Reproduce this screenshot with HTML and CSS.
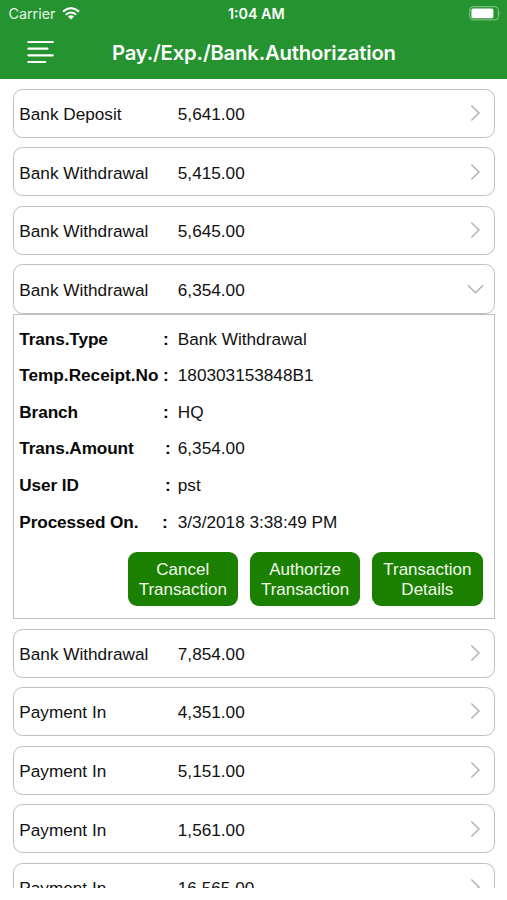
FILE: index.html
```html
<!DOCTYPE html>
<html lang="en">
<head>
<meta charset="utf-8">
<title>Pay./Exp./Bank.Authorization</title>
<link rel="stylesheet" href="styles.css">
</head>
<body>
<svg width="0" height="0" class="defs">
  <symbol id="right" viewBox="0 0 18 18"><path d="M4.4 1.6 12 9 4.4 16.4"/></symbol>
  <symbol id="down" viewBox="0 0 18 18"><path d="M1 5.2 8.5 12.7 16 5.2"/></symbol>
</svg>
<header class="header">
  <div class="status">
    <div class="carrier"><span>Carrier</span>
      <svg width="18" height="13" viewBox="0 0 18 13" fill="none" stroke="#fff" stroke-width="2.1"><path d="M1 4.6Q9-2.2 17 4.6M3.8 7.7Q9 3.3 14.2 7.7"/><path d="M5.9 9.5Q9 7.2 12.1 9.5L9 12.6Z" fill="#fff" stroke="none"/></svg>
    </div>
    <span class="time">1:04 AM</span>
    <svg class="battery" width="33" height="15" viewBox="0 0 33 15"><rect x=".7" y=".7" width="28.6" height="13.2" rx="3.2" fill="none" stroke="#8bc98f" stroke-width="1"/><rect x="2.4" y="2.4" width="22" height="9.8" rx="1.5" fill="#fff"/><path d="M30.7 5q1.6 2.3 0 4.6z" fill="#8bc98f"/></svg>
  </div>
  <div class="navbar">
    <svg class="menu" width="28" height="24" viewBox="0 0 28 24" fill="none" stroke="#fff" stroke-width="2.2" stroke-linecap="round"><path d="M2.4 2H26.8M2.4 8.7H21.5M2.4 15.3H26.8M2.4 22H19.3"/></svg>
    <h1 class="title">Pay./Exp./Bank.Authorization</h1>
  </div>
</header>
<main class="list">
  <div class="row"><span class="type">Bank Deposit</span><span class="amount">5,641.00</span><svg class="chevron"><use href="#right"/></svg></div>
  <div class="row"><span class="type">Bank Withdrawal</span><span class="amount">5,415.00</span><svg class="chevron"><use href="#right"/></svg></div>
  <div class="row"><span class="type">Bank Withdrawal</span><span class="amount">5,645.00</span><svg class="chevron"><use href="#right"/></svg></div>
  <div class="row open"><span class="type">Bank Withdrawal</span><span class="amount">6,354.00</span><svg class="chevron"><use href="#down"/></svg></div>
  <section class="details">
    <dl class="fields">
      <div class="field"><dt>Trans.Type</dt><dd class="colon">:</dd><dd>Bank Withdrawal</dd></div>
      <div class="field"><dt>Temp.Receipt.No</dt><dd class="colon">:</dd><dd>180303153848B1</dd></div>
      <div class="field"><dt>Branch</dt><dd class="colon">:</dd><dd>HQ</dd></div>
      <div class="field"><dt>Trans.Amount</dt><dd class="colon wide">:</dd><dd>6,354.00</dd></div>
      <div class="field"><dt>User ID</dt><dd class="colon wide">:</dd><dd>pst</dd></div>
      <div class="field"><dt>Processed On.</dt><dd class="colon narrow">:</dd><dd>3/3/2018 3:38:49 PM</dd></div>
    </dl>
    <div class="actions">
      <button class="action">Cancel<br>Transaction</button>
      <button class="action">Authorize<br>Transaction</button>
      <button class="action">Transaction<br>Details</button>
    </div>
  </section>
  <div class="row"><span class="type">Bank Withdrawal</span><span class="amount">7,854.00</span><svg class="chevron"><use href="#right"/></svg></div>
  <div class="row"><span class="type">Payment In</span><span class="amount">4,351.00</span><svg class="chevron"><use href="#right"/></svg></div>
  <div class="row"><span class="type">Payment In</span><span class="amount">5,151.00</span><svg class="chevron"><use href="#right"/></svg></div>
  <div class="row"><span class="type">Payment In</span><span class="amount">1,561.00</span><svg class="chevron"><use href="#right"/></svg></div>
  <div class="row"><span class="type">Payment In</span><span class="amount">16,565.00</span><svg class="chevron"><use href="#right"/></svg></div>
</main>
</body>
</html>
```
FILE: styles.css
```css
* { box-sizing: border-box; }
body {
  margin: 0;
  height: 900px;
  overflow: hidden;
  background: #fff;
  color: #111;
  font: 17.2px/20px "Liberation Sans", Arial, sans-serif;
}
.defs { display: block; }
.header {
  height: 79px;
  background: #249330;
  color: #fff;
  font-family: Inter, sans-serif;
}
.status {
  display: grid;
  grid-template-columns: 1fr auto 1fr;
  align-items: center;
  height: 27px;
  padding: 0 5px 0 8.5px;
  font-size: 14.3px;
}
.carrier { display: flex; align-items: center; gap: 6.5px; color: #e2f5e3; }
.time { padding-left: 2px; font-weight: 600; font-size: 14.3px; }
.battery { justify-self: end; }
.navbar { display: flex; align-items: center; height: 50px; padding-left: 26px; }
.menu { flex: none; }
.title {
  margin: 1px 0 0 58px;
  font-size: 20.3px;
  font-weight: 600;
  line-height: 26px;
  letter-spacing: -0.17px;
  white-space: nowrap;
}
.list {
  height: 808.5px;
  padding: 9.7px 12px 0 13px;
  overflow: hidden;
}
.row {
  display: flex;
  align-items: center;
  height: 49.2px;
  margin-bottom: 9.4px;
  padding: 1.4px 9px 0 5.3px;
  border: 1.3px solid #c0c0c0;
  border-radius: 9.5px;
}
.row.open { margin-bottom: 0; }
.type { width: 158.5px; }
.amount { flex: 1; }
.chevron {
  width: 18px;
  height: 18px;
  margin-top: -2px;
  fill: none;
  stroke: #b0b0b0;
  stroke-width: 1.4;
}
.details {
  height: 305.5px;
  margin-bottom: 9.4px;
  padding: 5.6px 11.5px 0 5.3px;
  border: 1.3px solid #c0c0c0;
}
.fields { margin: 0; }
.field {
  display: grid;
  grid-template-columns: 143.6px 14.9px 1fr;
  align-items: center;
  height: 36.65px;
}
.field dt, .colon { font-weight: bold; color: #080808; }
.field dt { letter-spacing: -0.1px; }
.field:nth-child(2) dt { letter-spacing: 0; }
.field dd { margin: 0; }
.colon.wide { padding-left: 2px; }
.field .colon.narrow { margin-left: -1px; }
.actions { display: flex; justify-content: flex-end; gap: 12px; margin-top: 11.5px; }
.action {
  width: 110.3px;
  height: 54px;
  padding: 2.4px 0 0;
  border: 0;
  border-radius: 9px;
  background: #1b8000;
  color: #f0faee;
  font: 17px/20px "Liberation Sans", Arial, sans-serif;
}
```
